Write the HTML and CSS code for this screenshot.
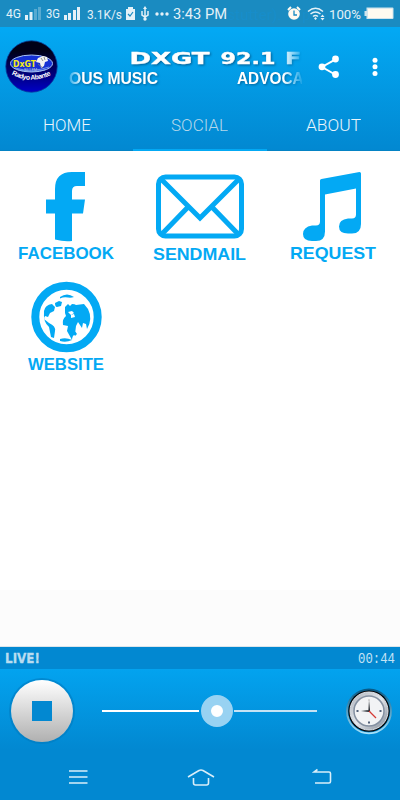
FILE: index.html
```html
<!DOCTYPE html>
<html lang="en">
<head>
    <meta charset="UTF-8">
    <meta name="viewport" content="width=device-width, initial-scale=1.0">
    <title>DXGT 92.1 FM</title>
    <link rel="stylesheet" href="styles.css">
</head>
<body>
    <div class="status-bar">
        <svg width="400" height="27" viewBox="0 0 400 27">
            <g class="ghost-text">
                <text x="227" y="20" font-size="15" textLength="54">stutter).</text>
                <text x="302" y="20" font-size="15" textLength="84">p possible</text>
            </g>
            <g class="status-text">
                <text x="6" y="18" font-size="12" textLength="15" lengthAdjust="spacingAndGlyphs">4G</text>
                <text x="46" y="18" font-size="12" textLength="14" lengthAdjust="spacingAndGlyphs">3G</text>
                <text x="87" y="18.500" font-size="13" textLength="35" lengthAdjust="spacingAndGlyphs">3.1K/s</text>
                <text x="173" y="19" font-size="14" textLength="54" lengthAdjust="spacingAndGlyphs">3:43 PM</text>
                <text x="329" y="18.500" font-size="13" textLength="32" lengthAdjust="spacingAndGlyphs">100%</text>
            </g>
            <g fill="#e4f1f8">
                <path d="M25 15h3v5h-3zM29.500 12h3v8h-3z"/>
                <path opacity=".3" d="M34 9h3v11h-3zM38 7h3v13h-3z"/>
                <path d="M64 15h3v5h-3zM68 13h3v7h-3zM73 10h3v10h-3zM77 7h3v13h-3z"/>
                <path d="M126 9h2V7h5v2h2v11h-9z"/>
                <circle cx="157" cy="14" r="1.700"/><circle cx="162" cy="14" r="1.700"/><circle cx="167" cy="14" r="1.700"/>
            </g>
            <path d="M128 14l2 2 3-4" fill="none" stroke="#1a8bc1" stroke-width="1.200"/>
            <path d="M145 8v11M142 11v4l3 2 3-2v-4" fill="none" stroke="#e4f1f8" stroke-width="1.500"/>
            <circle cx="145" cy="19" r="1.700" fill="#e4f1f8"/>
            <path d="M143 9l2-3 2 3z" fill="#e4f1f8"/>
            <circle cx="294" cy="14" r="5.800" fill="#fffaf0"/>
            <path d="M288 10l3-3M300 10l-3-3" stroke="#fffaf0" stroke-width="2"/>
            <path d="M294 10.500v4.500h3" fill="none" stroke="#1a8bc1" stroke-width="1.300"/>
            <g fill="none" stroke="#e4f1f8" stroke-width="1.500">
                <path d="M308 11.500q7.500-6.500 15 0M310.500 14q5-4 10 0M313 16.500q2.500-2 5 0"/>
            </g>
            <path d="M315.500 17l-1.500 1.500 1.500 1.500 1.500-1.500zM320.500 17l2-2.500 2 2.500zM320.500 18l2 2.500 2-2.500z" fill="#e4f1f8"/>
            <path d="M366.500 7.500h26a1 1 0 0 1 1 1v9.500a1 1 0 0 1-1 1h-26v-3h-2v-5h2z" fill="#cfe3ec"/>
            <path d="M368 8.700h24.500v9.300H368z" fill="#fffaf0"/>
        </svg>
    </div>

    <header class="header">
        <div class="toolbar">
            <svg class="logo" width="53" height="53" viewBox="0 0 53 53">
                <defs>
                    <linearGradient id="logoBg" x1="0" y1="0" x2="0" y2="1">
                        <stop offset=".2" stop-color="#000018"/>
                        <stop offset="1" stop-color="#0000c8"/>
                    </linearGradient>
                    <path id="logoCurve" d="M6.500 34.500Q26 45 47 34.500"/>
                </defs>
                <circle cx="26.500" cy="26.500" r="25.700" fill="url(#logoBg)" stroke="#073e9a" stroke-width=".8"/>
                <ellipse cx="26.500" cy="23.500" rx="21" ry="8.500" fill="#1530d4" stroke="#a9c4f3"/>
                <path d="M10 28q17 5 34-1M13 30q14 3 27 0" fill="none" stroke="#9bbcf0" stroke-width=".7"/>
                <text class="logo-name" x="8" y="27" font-size="8" textLength="23" lengthAdjust="spacingAndGlyphs">DxGT</text>
                <text class="logo-freq" x="19" y="31" font-size="4" textLength="13">92.1 FM</text>
                <path d="M33 18l5-2 4 1 1 4-3 1-1 4-3 2-1-5-4-1z" fill="#f2f2f2"/>
                <path d="M36 18l2 3M39 17l1 3M33 24l5 4" stroke="#777" stroke-width=".8"/>
                <text class="logo-tag" font-size="6.800"><textPath href="#logoCurve" textLength="41">Radyo Abante</textPath></text>
            </svg>
            <div class="titles">
                <svg width="233" height="48" viewBox="0 0 233 48">
                    <defs>
                        <linearGradient id="fade">
                            <stop offset="0" stop-color="#fff" stop-opacity=".2"/>
                            <stop offset=".06" stop-color="#fff"/>
                            <stop offset=".92" stop-color="#fff"/>
                            <stop offset="1" stop-color="#fff" stop-opacity=".1"/>
                        </linearGradient>
                        <mask id="edge"><rect width="233" height="48" fill="url(#fade)"/></mask>
                    </defs>
                    <g mask="url(#edge)">
                        <g class="station">
                            <text x="60.500" y="25" textLength="80" lengthAdjust="spacingAndGlyphs">DXGT</text>
                            <text x="151.500" y="25" textLength="55" lengthAdjust="spacingAndGlyphs">92.1</text>
                            <text x="216" y="25" textLength="40" lengthAdjust="spacingAndGlyphs">FM</text>
                        </g>
                        <g class="slogan">
                            <text x="0" y="44.500" textLength="89" lengthAdjust="spacingAndGlyphs">OUS MUSIC</text>
                            <text x="168" y="44.500" textLength="88" lengthAdjust="spacingAndGlyphs">ADVOCACY</text>
                        </g>
                    </g>
                </svg>
            </div>
            <svg class="share" width="22" height="24" viewBox="0 0 22 24" fill="#fff">
                <path d="M18 4.200L4 12l14 8" fill="none" stroke="#fff" stroke-width="2"/>
                <circle cx="17.500" cy="4" r="3.400"/><circle cx="4" cy="11.800" r="3.400"/><circle cx="17.500" cy="19.500" r="3.400"/>
            </svg>
            <svg class="more" width="6" height="20" viewBox="0 0 6 20" fill="#fff">
                <circle cx="3" cy="3.200" r="2.500"/><circle cx="3" cy="9.800" r="2.500"/><circle cx="3" cy="16.400" r="2.500"/>
            </svg>
        </div>
        <nav class="tabs">
            <a class="tab"><svg width="48" height="20"><text x="0" y="16" textLength="48" lengthAdjust="spacingAndGlyphs">HOME</text></svg></a>
            <a class="tab active"><svg width="57" height="20"><text x="0" y="16" textLength="57" lengthAdjust="spacingAndGlyphs">SOCIAL</text></svg></a>
            <a class="tab"><svg width="55" height="20"><text x="0" y="16" textLength="55" lengthAdjust="spacingAndGlyphs">ABOUT</text></svg></a>
        </nav>
    </header>

    <main class="grid">
        <svg class="tile" viewBox="0 0 133 110">
            <path d="M85 21v14h-8q-5 0-5 5v8.500h13l-2 14H72V90q-8 1-17-1.500V62.500h-9v-14h9V38q0-17 17-17z"/>
            <text x="18" y="108" textLength="96" lengthAdjust="spacingAndGlyphs">FACEBOOK</text>
        </svg>
        <svg class="tile" viewBox="0 0 133 110">
            <g fill="none" stroke="#03a9f4" stroke-width="5">
                <rect x="25.500" y="26" width="83" height="59" rx="7"/>
                <path d="M28 28l39 39 39-39M28 84l29-30M106 84L77 54"/>
            </g>
            <text x="20" y="108.500" textLength="93" lengthAdjust="spacingAndGlyphs">SENDMAIL</text>
        </svg>
        <svg class="tile" viewBox="0 0 133 110">
            <path d="M55.500 28L93.500 21q1.500 0 1.500 1.500V73q0 9.500-9 9.500h-4q-9 0-9-7t9-8h4q4 0 4-4V37.500L59 43.500v37q0 9.500-9 9.500h-4q-9 0-9-7t9-8.500h4q4 0 4-4V29.500q0-1.500 1.500-1.500z"/>
            <text x="24" y="107.500" textLength="86" lengthAdjust="spacingAndGlyphs">REQUEST</text>
        </svg>
        <svg class="tile" viewBox="0 0 133 110">
            <circle cx="66.500" cy="56" r="31.200" fill="none" stroke="#03a9f4" stroke-width="8"/>
            <path d="M60 36q7-5 14 0-3 1-6 .5-4-1-8 1zM55 42l4-2 3 1-1 4-4 1q-2 0-2-4zM44 50q1-6 8-7l3 3-1 4-4 2-2 4-3-1-1 3 5 4q7 3 6 8l-1 7-3-1-2-10q-6-5-5-16zM65 46l3-3 2 2 2-2q3 0 4 1l8-1 4 5q5 10-1 20l-1-5-3-1-1 5-4-6-2 4-1 8q-3 2-3 6l-5-9 1-5-5-1q-1-6 3-9l-1-3zM60 78q6-2 12 1-6 3-12 1zM73 72l2-2 2 3-2 2z"/>
            <path d="M68 51l4-1 2 2-3 2zM71 54l3-1 1 3-4 1z" fill="#fff"/>
            <text x="28" y="109" textLength="76" lengthAdjust="spacingAndGlyphs">WEBSITE</text>
        </svg>
    </main>

    <div class="banner"></div>

    <footer class="player">
        <div class="info-bar">
            <svg width="36" height="16"><text class="live" x="0" y="13" textLength="35" lengthAdjust="spacingAndGlyphs">LIVE!</text></svg>
            <svg width="37" height="16"><text class="time" x="0" y="11.200" transform="scale(1 1.130)" textLength="37" lengthAdjust="spacingAndGlyphs">00:44</text></svg>
        </div>
        <div class="controls">
            <div class="stop"><span></span></div>
            <div class="volume">
                <span class="track filled"></span>
                <span class="thumb"></span>
                <span class="track"></span>
            </div>
            <svg class="clock" width="46" height="48" viewBox="0 0 46 48">
                <defs>
                    <linearGradient id="rim" x1="0" y1="0" x2="0" y2="1">
                        <stop offset="0" stop-color="#075987"/>
                        <stop offset="1" stop-color="#a5e2fb"/>
                    </linearGradient>
                    <linearGradient id="metal" x1="0" y1="0" x2="1" y2="1">
                        <stop offset="0" stop-color="#aab1bb"/>
                        <stop offset=".5" stop-color="#e4e7ec"/>
                        <stop offset="1" stop-color="#7b8491"/>
                    </linearGradient>
                </defs>
                <circle cx="23" cy="24.300" r="22" fill="none" stroke="url(#rim)" stroke-width="1.800"/>
                <circle cx="23" cy="24" r="20.800" fill="#080b0f"/>
                <circle cx="23" cy="24" r="19" fill="url(#metal)" stroke="#dfe5ec"/>
                <circle cx="23" cy="24" r="15" fill="#f2f3f5" stroke="#8490a1" stroke-width="1.500"/>
                <path d="M22 34.500h2v2h-2zM10.500 23h2v2h-2zM33.500 23h2v2h-2z" fill="#526179"/>
                <path d="M22 12.500h2v1h-2z" fill="#bbb"/>
                <path d="M22.300 25L23 13l1.200 12zM15 24l8-1v2z" fill="#252a31"/>
                <path d="M23 24l7 7" stroke="#d53a35" stroke-width="1.200"/>
            </svg>
        </div>
    </footer>

    <div class="nav-bar">
        <svg width="20" height="16" viewBox="0 0 20 16"><path d="M1 2h18.500M1 8h18.500M1 14h18.500"/></svg>
        <svg width="28" height="18" viewBox="0 0 28 18"><path d="M1 9l11-6.500q2-1 4 0L27 9M6.500 10v5q0 2 2 2h11q2 0 2-2v-5"/></svg>
        <svg width="20" height="18" viewBox="0 0 20 18"><path d="M5.500 1.500L2 4h15q1.500 0 1.500 1.500v8q0 1.500-1.500 1.500H3"/></svg>
    </div>
</body>
</html>
```
FILE: styles.css
```css
* {
    box-sizing: border-box;
}

body {
    margin: 0;
    width: 400px;
    height: 800px;
    display: flex;
    flex-direction: column;
    background: #fff;
    font-family: Roboto, "Liberation Sans", sans-serif;
    overflow: hidden;
}

svg {
    display: block;
    flex: none;
}

.status-bar {
    height: 27px;
    background: #1a8bc1;
}

.status-text {
    fill: #e4f1f8;
}

.ghost-text {
    fill: #168fd0;
    opacity: 0.6;
}

.header {
    height: 124px;
    background: linear-gradient(#03a9f4, #0288d1);
    border-bottom: 1px solid #0583c4;
}

.toolbar {
    height: 73px;
    display: flex;
    align-items: flex-start;
    padding: 12px 0 0 5px;
}

.logo {
    margin-top: 1px;
}

.titles {
    margin-left: 11px;
}

.share {
    margin: 16px 0 0 16px;
}

.more {
    margin: 18px 0 0 32px;
}

.station {
    fill: #fff;
    stroke: #fff;
    stroke-width: 0.4px;
    font: bold 16.5px "DejaVu Sans", sans-serif;
    filter: drop-shadow(1px 1px 1px rgba(0, 50, 90, 0.6));
}

.slogan {
    fill: #fff;
    font: bold 16.5px "Liberation Sans", Arial, sans-serif;
    filter: drop-shadow(1px 1px 1px rgba(0, 50, 90, 0.5));
}

.logo-name {
    fill: #f6ed17;
    font-family: "DejaVu Sans", sans-serif;
    font-weight: bold;
}

.logo-freq {
    fill: #b9c7dd;
}

.logo-tag {
    fill: #fff;
    font-family: "Liberation Sans", sans-serif;
    font-weight: bold;
}

.tabs {
    height: 51px;
    display: grid;
    grid-template-columns: repeat(3, 1fr);
}

.tab {
    display: flex;
    justify-content: center;
    padding-top: 15px;
    fill: #e9f5fc;
    font-size: 17px;
    font-weight: 300;
}

.tab.active {
    fill: #b5d7ea;
    border-bottom: 2px solid #03a9f4;
}

.grid {
    height: 439px;
    display: grid;
    grid-template-columns: repeat(3, 133px);
    grid-auto-rows: 110px;
    align-content: start;
    background: #fff;
}

.tile {
    width: 133px;
    height: 110px;
    fill: #03a9f4;
    overflow: visible;
}

.tile text {
    font: bold 17px "Liberation Sans", Arial, sans-serif;
}

.banner {
    height: 57px;
    background: #fcfcfc;
    border-bottom: 1px solid #dce5ea;
}

.info-bar {
    height: 22px;
    display: flex;
    align-items: center;
    justify-content: space-between;
    padding: 0 5px;
    background: #0288d1;
}

.info-bar svg {
    overflow: visible;
}

.live {
    fill: #b9dcf0;
    stroke: #b9dcf0;
    stroke-width: 0.3px;
    font: bold 14px "DejaVu Sans", sans-serif;
}

.time {
    fill: #c3e3f5;
    font: 13.5px "Liberation Mono", monospace;
}

.controls {
    height: 83px;
    display: flex;
    align-items: center;
    padding-left: 11px;
    background: linear-gradient(#03a3ef, #0288d1 97%);
}

.stop {
    width: 62px;
    height: 62px;
    border-radius: 50%;
    display: flex;
    align-items: center;
    justify-content: center;
    background: linear-gradient(#fff, #b0b0b0);
    box-shadow: 0 0 0 2px rgba(2, 125, 194, 0.65);
}

.stop span {
    width: 20px;
    height: 20px;
    background: #0288d1;
}

.volume {
    display: flex;
    align-items: center;
    margin-left: 29px;
}

.track {
    width: 83px;
    height: 2px;
    margin-left: 1px;
    background: #c5e2f4;
}

.track.filled {
    width: 97px;
    margin: 0 2px 0 0;
    background: #fff;
}

.thumb {
    width: 32px;
    height: 32px;
    border-radius: 50%;
    border: 10.5px solid #98d2f2;
    background: #fff;
}

.clock {
    margin-left: 29px;
}

.nav-bar {
    height: 48px;
    display: flex;
    align-items: center;
    padding: 2px 0 0 68px;
    background: #0288d1;
    fill: none;
    stroke: #d9eef9;
    stroke-width: 1.6px;
}

.nav-bar svg:nth-child(2) {
    margin-left: 99px;
}

.nav-bar svg:nth-child(3) {
    margin-left: 97px;
}
```
